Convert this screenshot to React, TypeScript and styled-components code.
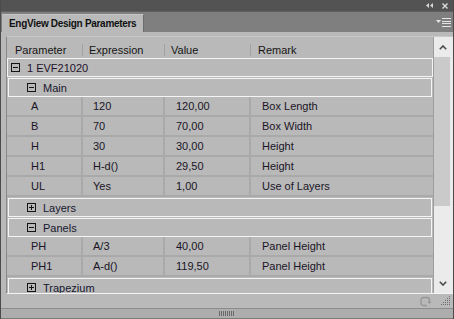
import React from 'react';
import styled, { createGlobalStyle } from 'styled-components';

const GlobalStyle = createGlobalStyle`
  html, body {
    margin: 0;
    padding: 0;
    background: #b9b9b9;
  }
  body {
    font-family: "Liberation Sans", Arial, sans-serif;
    font-size: 11px;
  }
`;

const COLS = [76, 82, 86];

const Window = styled.div`
  width: 454px;
  height: 319px;
  box-sizing: border-box;
  display: flex;
  flex-direction: column;
  background: #b9b9b9;
  border-left: 1px solid #4b4b4b;
  border-right: 1px solid #4b4b4b;
  overflow: hidden;
`;

const TitleStrip = styled.div`
  height: 11px;
  flex: 0 0 11px;
  background: #535353;
  display: flex;
  justify-content: flex-end;
  align-items: center;
  gap: 9px;
  padding-right: 5px;
`;

const TabBar = styled.div`
  height: 21px;
  flex: 0 0 21px;
  box-sizing: border-box;
  background: #7f7f7f;
  border-top: 1px solid #5f5f5f;
  display: flex;
  align-items: flex-end;
  justify-content: space-between;
  padding-left: 1px;
`;

const Tab = styled.div`
  width: 142px;
  height: 18px;
  box-sizing: border-box;
  background: #b9b9b9;
  border-right: 1px solid #6c6c6c;
  border-top: 1px solid #c4c4c4;
  padding-left: 7px;
  font-weight: bold;
  font-size: 10px;
  letter-spacing: -0.3px;
  line-height: 17px;
  color: #111;
  white-space: nowrap;
`;

const MenuButton = styled.div`
  align-self: center;
  display: flex;
  padding-right: 2px;
`;

const Body = styled.div`
  flex: 1;
  display: flex;
  flex-direction: column;
  padding: 4px 0 0 5px;
`;

const Frame = styled.div`
  height: 258px;
  flex: 0 0 258px;
  box-sizing: border-box;
  display: flex;
  border-top: 1px solid #c9c9c9;
  border-left: 1px solid #8a8a8a;
  border-bottom: 1px solid #f4f4f4;
`;

const TableArea = styled.div`
  flex: 1;
  display: flex;
  flex-direction: column;
  min-width: 0;
`;

const HeaderRow = styled.div`
  height: 20px;
  flex: 0 0 20px;
  display: flex;
  align-items: center;
  color: #161616;
`;

const HeadCell = styled.div<{ $w?: number; $pad: number }>`
  ${(p) => (p.$w ? `flex: 0 0 ${p.$w}px;` : 'flex: 1;')}
  height: 100%;
  display: flex;
  align-items: center;
  justify-content: space-between;
  padding-left: ${(p) => p.$pad}px;
  box-sizing: border-box;
  padding-top: 5px;
`;

const HeadSep = styled.span`
  width: 1px;
  height: 12px;
  background: #a2a2a2;
`;

const Viewport = styled.div`
  flex: 1;
  overflow: hidden;
`;

const GroupRow = styled.div<{ $level: number }>`
  height: 19px;
  box-sizing: border-box;
  margin: 1px ${(p) => p.$level}px 0;
  border: 1px solid #f4f4f4;
  display: flex;
  align-items: center;
  gap: 7px;
  padding-left: ${(p) => 3 + p.$level * 15}px;
  color: ${(p) => (p.$level === 0 ? '#24122a' : '#16162e')};
`;

const DataRow = styled.div`
  height: 20px;
  box-sizing: border-box;
  display: flex;
  border-bottom: 2px solid #a9a9a9;
  color: #1a1526;
`;

const Cell = styled.div<{ $w?: number; $pad: number }>`
  ${(p) => (p.$w ? `flex: 0 0 ${p.$w}px; border-right: 2px solid #a9a9a9;` : 'flex: 1;')}
  box-sizing: border-box;
  padding: 1px 0 0 ${(p) => p.$pad}px;
  line-height: 17px;
  white-space: nowrap;
`;

const Scrollbar = styled.div`
  width: 20px;
  flex: 0 0 20px;
  box-sizing: border-box;
  border-left: 1px solid #9d9d9d;
  background: #ebebeb;
  display: flex;
  flex-direction: column;
`;

const ScrollButton = styled.div`
  height: 20px;
  flex: 0 0 20px;
  display: flex;
  align-items: center;
  justify-content: center;
  padding-right: 2px;
`;

const Thumb = styled.div`
  height: 149px;
  margin-right: 3px;
  background: #cacaca;
`;

const Track = styled.div`
  flex: 1;
`;

const Footer = styled.div`
  flex: 1;
  display: flex;
  justify-content: flex-end;
  align-items: center;
  gap: 9px;
  padding-right: 2px;
`;

const BottomStrip = styled.div`
  height: 11px;
  flex: 0 0 11px;
  box-sizing: border-box;
  border-top: 1px solid #8c8c8c;
  border-bottom: 1px solid #7a7a7a;
  background: #adadad;
  display: flex;
  justify-content: center;
  align-items: center;
`;

const Expander = ({ open }: { open: boolean }) => (
  <svg width="9" height="9" viewBox="0 0 9 9">
    <rect x="0.5" y="0.5" width="8" height="8" fill="none" stroke="#141414" />
    <line x1="2" y1="4.5" x2="7" y2="4.5" stroke="#141414" />
    {!open && <line x1="4.5" y1="2" x2="4.5" y2="7" stroke="#141414" />}
  </svg>
);

type Row =
  | { kind: 'group'; level: number; label: string; open: boolean }
  | { kind: 'data'; cells: [string, string, string, string] };

const rows: Row[] = [
  { kind: 'group', level: 0, label: '1 EVF21020', open: true },
  { kind: 'group', level: 1, label: 'Main', open: true },
  { kind: 'data', cells: ['A', '120', '120,00', 'Box Length'] },
  { kind: 'data', cells: ['B', '70', '70,00', 'Box Width'] },
  { kind: 'data', cells: ['H', '30', '30,00', 'Height'] },
  { kind: 'data', cells: ['H1', 'H-d()', '29,50', 'Height'] },
  { kind: 'data', cells: ['UL', 'Yes', '1,00', 'Use of Layers'] },
  { kind: 'group', level: 1, label: 'Layers', open: false },
  { kind: 'group', level: 1, label: 'Panels', open: true },
  { kind: 'data', cells: ['PH', 'A/3', '40,00', 'Panel Height'] },
  { kind: 'data', cells: ['PH1', 'A-d()', '119,50', 'Panel Height'] },
  { kind: 'group', level: 1, label: 'Trapezium', open: false },
];

const headers = ['Parameter', 'Expression', 'Value', 'Remark'];
const headPad = [8, 6, 6, 7];
const cellPad = [24, 10, 11, 11];

export default function App() {
  return (
    <>
      <GlobalStyle />
      <Window>
        <TitleStrip>
          <svg width="7" height="5" viewBox="0 0 7 5">
            <polygon points="3,0 3,5 0,2.5" fill="#d6d6d6" />
            <polygon points="7,0 7,5 4,2.5" fill="#d6d6d6" />
          </svg>
          <svg width="6" height="6" viewBox="0 0 6 6">
            <path d="M0.5 0.5 L5.5 5.5 M5.5 0.5 L0.5 5.5" stroke="#dcdcdc" strokeWidth="1.4" />
          </svg>
        </TitleStrip>
        <TabBar>
          <Tab>EngView Design Parameters</Tab>
          <MenuButton>
            <svg width="15" height="9" viewBox="0 0 15 9">
              <polygon points="0,2 5,2 2.5,5" fill="#e4e4e4" />
              <rect x="6" y="0" width="9" height="1" fill="#e4e4e4" />
              <rect x="6" y="3" width="9" height="1" fill="#e4e4e4" />
              <rect x="6" y="5" width="9" height="1" fill="#e4e4e4" />
              <rect x="6" y="8" width="9" height="1" fill="#e4e4e4" />
            </svg>
          </MenuButton>
        </TabBar>
        <Body>
          <Frame>
            <TableArea>
              <HeaderRow>
                {headers.map((h, i) => (
                  <HeadCell key={h} $w={COLS[i]} $pad={headPad[i]}>
                    <span>{h}</span>
                    {i < 3 && <HeadSep />}
                  </HeadCell>
                ))}
              </HeaderRow>
              <Viewport>
                {rows.map((r, i) =>
                  r.kind === 'group' ? (
                    <GroupRow key={i} $level={r.level}>
                      <Expander open={r.open} />
                      <span>{r.label}</span>
                    </GroupRow>
                  ) : (
                    <DataRow key={i}>
                      {r.cells.map((c, j) => (
                        <Cell key={j} $w={COLS[j]} $pad={cellPad[j]}>
                          {c}
                        </Cell>
                      ))}
                    </DataRow>
                  )
                )}
              </Viewport>
            </TableArea>
            <Scrollbar>
              <ScrollButton>
                <svg width="8" height="5" viewBox="0 0 8 5">
                  <path d="M0.8 4.2 L4 1 L7.2 4.2" fill="none" stroke="#4a4a4a" strokeWidth="1.6" />
                </svg>
              </ScrollButton>
              <Thumb />
              <Track />
              <ScrollButton>
                <svg width="8" height="5" viewBox="0 0 8 5">
                  <path d="M0.8 0.8 L4 4 L7.2 0.8" fill="none" stroke="#4a4a4a" strokeWidth="1.6" />
                </svg>
              </ScrollButton>
            </Scrollbar>
          </Frame>
          <Footer>
            <svg width="12" height="11" viewBox="0 0 12 11">
              <path d="M7 1.5 H3.5 A2.5 2.5 0 0 0 1 4 V7 A2.5 2.5 0 0 0 3.5 9.5 H7" fill="none" stroke="#969696" strokeWidth="1.3" />
              <path d="M7 1.5 A2.5 2.5 0 0 1 9.5 4 V6" fill="none" stroke="#969696" strokeWidth="1.3" />
              <polygon points="7.5,5.5 11.5,5.5 9.5,8" fill="#969696" />
            </svg>
            <svg width="10" height="10" viewBox="0 0 10 10">
              {[0, 1, 2, 3, 4].flatMap((r) =>
                [0, 1, 2, 3, 4]
                  .filter((c) => c >= 4 - r)
                  .map((c) => (
                    <rect key={`${r}-${c}`} x={c * 2} y={r * 2} width="1" height="1" fill="#6e6e6e" />
                  ))
              )}
            </svg>
          </Footer>
        </Body>
        <BottomStrip>
          <svg width="16" height="5" viewBox="0 0 16 5">
            {[0, 1, 2, 3, 4, 5, 6, 7].map((i) => (
              <rect key={i} x={i * 2} y="0" width="1" height="5" fill="#6a6a6a" />
            ))}
          </svg>
        </BottomStrip>
      </Window>
    </>
  );
}
